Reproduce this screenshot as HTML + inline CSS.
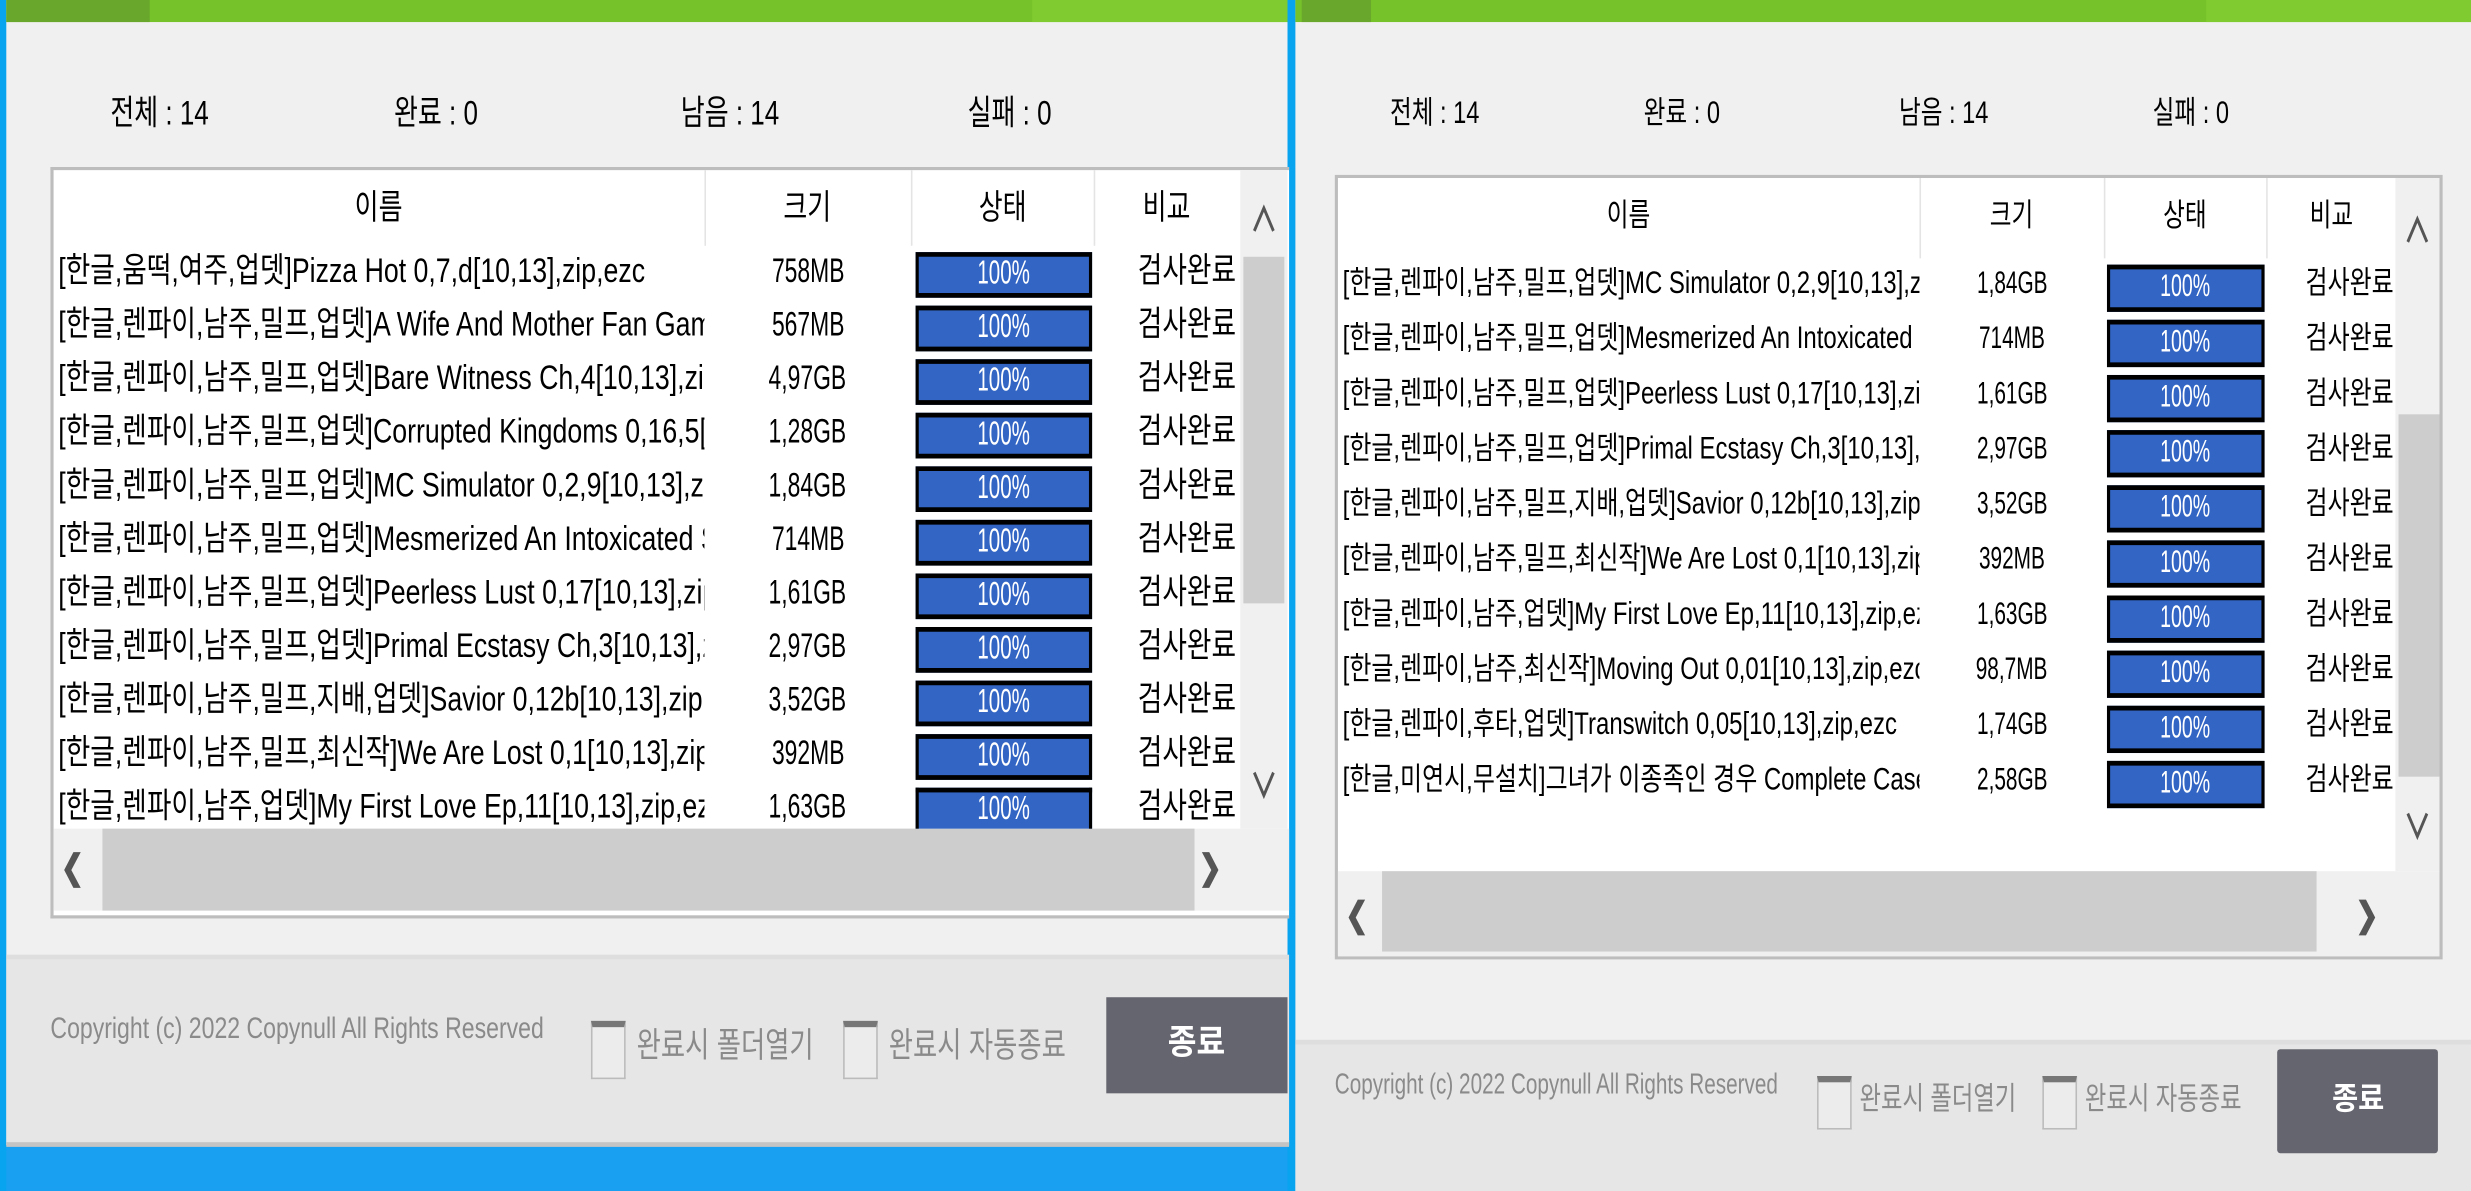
<!DOCTYPE html>
<html><head><meta charset="utf-8"><style>
*{margin:0;padding:0;box-sizing:border-box}
html,body{width:2471px;height:1191px;overflow:hidden;background:#1aa0f0}
#s{position:absolute;left:0;top:0;width:1568px;height:756px;transform:scale(1.5759,1.5754);transform-origin:0 0;font-family:"Liberation Sans","Noto Sans CJK KR",sans-serif}
.a{position:absolute}
.t{display:inline-block;white-space:nowrap;transform:scaleX(.75);transform-origin:left center;font-size:22px;line-height:24px;color:#000}
.nm .t{transform:scaleX(.77)}
.c{position:absolute;text-align:center;white-space:nowrap}
.c .t{transform-origin:center center}
.sz .t{transform:scaleX(.66)}
.nm{position:absolute;overflow:hidden;height:26px;white-space:nowrap}
.bar{position:absolute;background:#3366c4;border-top:3px solid #000;border-bottom:3px solid #000;border-left:2px solid #000;border-right:2px solid #000;text-align:center}
.bar .t{color:#fff;font-size:21px;line-height:22px;transform:scaleX(.62);transform-origin:center center}
.g .t{color:#8a8a8a}
.cb{position:absolute;width:22px;height:37px;background:#ececec;border:1px solid #bbb;border-top:4px solid #777}
.ar{position:absolute;font-size:22px;font-weight:bold;color:#555;text-align:center;transform:scaleX(.8)}
.r .t{font-size:20px}
.r .bar .t{font-size:20px}
.r .nm .t{transform:scaleX(.76)}
</style></head><body><div id="s">
<!-- left window -->
<div class="a" style="left:0;top:0;width:4px;height:756px;background:#08a4f0"></div>
<div class="a" style="left:4px;top:0;width:814px;height:727px;background:#f0f0f0"></div>
<div class="a" style="left:4px;top:0;width:814px;height:14px;background:#76c22a"></div>
<div class="a" style="left:4px;top:0;width:91px;height:14px;background:#68a72c"></div>
<div class="a" style="left:655px;top:0;width:163px;height:14px;background:#80cc30"></div>
<div class="a" style="left:817px;top:0;width:5px;height:756px;background:#08a4f0"></div>
<div class="a" style="left:70px;top:60px"><span class="t">전체 : 14</span></div>
<div class="a" style="left:250px;top:60px"><span class="t">완료 : 0</span></div>
<div class="a" style="left:432px;top:60px"><span class="t">남음 : 14</span></div>
<div class="a" style="left:614px;top:60px"><span class="t">실패 : 0</span></div>
<div class="a" style="left:32px;top:106px;width:786px;height:477px;border:2px solid #bdbdbd;border-right:none;background:#fff"></div>
<div class="a" style="left:447px;top:108px;width:1px;height:48px;background:#e4e4e4"></div>
<div class="a" style="left:578px;top:108px;width:1px;height:48px;background:#e4e4e4"></div>
<div class="a" style="left:694px;top:108px;width:1px;height:48px;background:#e4e4e4"></div>
<div class="c" style="left:34px;width:413px;top:120px"><span class="t">이름</span></div>
<div class="c" style="left:447px;width:131px;top:120px"><span class="t">크기</span></div>
<div class="c" style="left:578px;width:116px;top:120px"><span class="t">상태</span></div>
<div class="c" style="left:694px;width:93px;top:120px"><span class="t">비교</span></div>
<div class="a" style="left:787px;top:108px;width:30px;height:418px;background:#f0f0f0"></div>
<div class="a" style="left:789px;top:163px;width:26px;height:220px;background:#cdcdcd"></div>
<div class="ar" style="left:787px;width:30px;top:122px">&#8743;</div>
<div class="ar" style="left:787px;width:30px;top:482px">&#8744;</div>
<div class="a" style="left:34px;top:526px;width:784px;height:52px;background:#f0f0f0"></div>
<div class="a" style="left:65px;top:526px;width:693px;height:52px;background:#cdcdcd"></div>
<div class="ar" style="left:36px;width:20px;top:538px">&#10094;</div>
<div class="ar" style="left:758px;width:20px;top:538px">&#10095;</div>
<div class="a" style="left:4px;top:606px;width:814px;height:3px;background:#dedede"></div>
<div class="a" style="left:4px;top:609px;width:814px;height:118px;background:#e6e6e6"></div>
<div class="a" style="left:4px;top:725px;width:814px;height:3px;background:#c4c4c4"></div>
<div class="a g" style="left:32px;top:642px"><span class="t" style="font-size:19px;transform:scaleX(.77)">Copyright (c) 2022 Copynull All Rights Reserved</span></div>
<div class="cb" style="left:375px;top:648px"></div>
<div class="a g" style="left:404px;top:652px"><span class="t" style="transform:scaleX(.76)">완료시 폴더열기</span></div>
<div class="cb" style="left:535px;top:648px"></div>
<div class="a g" style="left:564px;top:652px"><span class="t" style="transform:scaleX(.76)">완료시 자동종료</span></div>
<div class="a" style="left:702px;top:633px;width:115px;height:61px;background:#65656f"></div>
<div class="c" style="left:702px;width:115px;top:650px"><span class="t" style="color:#fff;font-weight:bold;transform:scaleX(.9)">종료</span></div>

<!-- left rows -->
<div class="nm" style="left:37px;top:160px;width:410px"><span class="t">[한글,움떡,여주,업뎃]Pizza Hot 0,7,d[10,13],zip,ezc</span></div>
<div class="nm" style="left:37px;top:194px;width:410px"><span class="t">[한글,렌파이,남주,밀프,업뎃]A Wife And Mother Fan Game</span></div>
<div class="nm" style="left:37px;top:228px;width:410px"><span class="t">[한글,렌파이,남주,밀프,업뎃]Bare Witness Ch,4[10,13],zip</span></div>
<div class="nm" style="left:37px;top:262px;width:410px"><span class="t">[한글,렌파이,남주,밀프,업뎃]Corrupted Kingdoms 0,16,5[10</span></div>
<div class="nm" style="left:37px;top:296px;width:410px"><span class="t">[한글,렌파이,남주,밀프,업뎃]MC Simulator 0,2,9[10,13],zip</span></div>
<div class="nm" style="left:37px;top:330px;width:410px"><span class="t">[한글,렌파이,남주,밀프,업뎃]Mesmerized An Intoxicated S</span></div>
<div class="nm" style="left:37px;top:364px;width:410px"><span class="t">[한글,렌파이,남주,밀프,업뎃]Peerless Lust 0,17[10,13],zip</span></div>
<div class="nm" style="left:37px;top:398px;width:410px"><span class="t">[한글,렌파이,남주,밀프,업뎃]Primal Ecstasy Ch,3[10,13],zip</span></div>
<div class="nm" style="left:37px;top:432px;width:410px"><span class="t">[한글,렌파이,남주,밀프,지배,업뎃]Savior 0,12b[10,13],zip,ezc</span></div>
<div class="nm" style="left:37px;top:466px;width:410px"><span class="t">[한글,렌파이,남주,밀프,최신작]We Are Lost 0,1[10,13],zip,ezc</span></div>
<div class="nm" style="left:37px;top:500px;width:410px"><span class="t">[한글,렌파이,남주,업뎃]My First Love Ep,11[10,13],zip,ezc</span></div>
<div class="c sz" style="left:447px;width:131px;top:160px"><span class="t">758MB</span></div>
<div class="c sz" style="left:447px;width:131px;top:194px"><span class="t">567MB</span></div>
<div class="c sz" style="left:447px;width:131px;top:228px"><span class="t">4,97GB</span></div>
<div class="c sz" style="left:447px;width:131px;top:262px"><span class="t">1,28GB</span></div>
<div class="c sz" style="left:447px;width:131px;top:296px"><span class="t">1,84GB</span></div>
<div class="c sz" style="left:447px;width:131px;top:330px"><span class="t">714MB</span></div>
<div class="c sz" style="left:447px;width:131px;top:364px"><span class="t">1,61GB</span></div>
<div class="c sz" style="left:447px;width:131px;top:398px"><span class="t">2,97GB</span></div>
<div class="c sz" style="left:447px;width:131px;top:432px"><span class="t">3,52GB</span></div>
<div class="c sz" style="left:447px;width:131px;top:466px"><span class="t">392MB</span></div>
<div class="c sz" style="left:447px;width:131px;top:500px"><span class="t">1,63GB</span></div>
<div class="bar" style="left:581px;top:160px;width:112px;height:29px"><span class="t">100%</span></div>
<div class="bar" style="left:581px;top:194px;width:112px;height:29px"><span class="t">100%</span></div>
<div class="bar" style="left:581px;top:228px;width:112px;height:29px"><span class="t">100%</span></div>
<div class="bar" style="left:581px;top:262px;width:112px;height:29px"><span class="t">100%</span></div>
<div class="bar" style="left:581px;top:296px;width:112px;height:29px"><span class="t">100%</span></div>
<div class="bar" style="left:581px;top:330px;width:112px;height:29px"><span class="t">100%</span></div>
<div class="bar" style="left:581px;top:364px;width:112px;height:29px"><span class="t">100%</span></div>
<div class="bar" style="left:581px;top:398px;width:112px;height:29px"><span class="t">100%</span></div>
<div class="bar" style="left:581px;top:432px;width:112px;height:29px"><span class="t">100%</span></div>
<div class="bar" style="left:581px;top:466px;width:112px;height:29px"><span class="t">100%</span></div>
<div class="bar" style="left:581px;top:500px;width:112px;height:26px;border-bottom:none"><span class="t">100%</span></div>
<div class="nm" style="left:722px;top:160px;width:65px"><span class="t">검사완료</span></div>
<div class="nm" style="left:722px;top:194px;width:65px"><span class="t">검사완료</span></div>
<div class="nm" style="left:722px;top:228px;width:65px"><span class="t">검사완료</span></div>
<div class="nm" style="left:722px;top:262px;width:65px"><span class="t">검사완료</span></div>
<div class="nm" style="left:722px;top:296px;width:65px"><span class="t">검사완료</span></div>
<div class="nm" style="left:722px;top:330px;width:65px"><span class="t">검사완료</span></div>
<div class="nm" style="left:722px;top:364px;width:65px"><span class="t">검사완료</span></div>
<div class="nm" style="left:722px;top:398px;width:65px"><span class="t">검사완료</span></div>
<div class="nm" style="left:722px;top:432px;width:65px"><span class="t">검사완료</span></div>
<div class="nm" style="left:722px;top:466px;width:65px"><span class="t">검사완료</span></div>
<div class="nm" style="left:722px;top:500px;width:65px"><span class="t">검사완료</span></div>

<!-- right window -->
<div class="r">
<div class="a" style="left:822px;top:0;width:746px;height:756px;background:#f0f0f0"></div>
<div class="a" style="left:822px;top:0;width:746px;height:14px;background:#76c22a"></div>
<div class="a" style="left:826px;top:0;width:44px;height:14px;background:#68a72c"></div>
<div class="a" style="left:1400px;top:0;width:168px;height:14px;background:#80cc30"></div>
<div class="a" style="left:882px;top:60px"><span class="t">전체 : 14</span></div>
<div class="a" style="left:1043px;top:60px"><span class="t">완료 : 0</span></div>
<div class="a" style="left:1205px;top:60px"><span class="t">남음 : 14</span></div>
<div class="a" style="left:1366px;top:60px"><span class="t">실패 : 0</span></div>
<div class="a" style="left:847px;top:111px;width:703px;height:498px;border:2px solid #bdbdbd;background:#fff"></div>
<div class="a" style="left:1218px;top:113px;width:1px;height:51px;background:#e4e4e4"></div>
<div class="a" style="left:1335px;top:113px;width:1px;height:51px;background:#e4e4e4"></div>
<div class="a" style="left:1438px;top:113px;width:1px;height:51px;background:#e4e4e4"></div>
<div class="c" style="left:849px;width:369px;top:125px"><span class="t">이름</span></div>
<div class="c" style="left:1218px;width:117px;top:125px"><span class="t">크기</span></div>
<div class="c" style="left:1335px;width:103px;top:125px"><span class="t">상태</span></div>
<div class="c" style="left:1438px;width:82px;top:125px"><span class="t">비교</span></div>
<div class="a" style="left:1520px;top:113px;width:28px;height:440px;background:#f0f0f0"></div>
<div class="a" style="left:1522px;top:263px;width:26px;height:230px;background:#cdcdcd"></div>
<div class="ar" style="left:1520px;width:28px;top:129px">&#8743;</div>
<div class="ar" style="left:1520px;width:28px;top:508px">&#8744;</div>
<div class="a" style="left:849px;top:553px;width:699px;height:54px;background:#f0f0f0"></div>
<div class="a" style="left:877px;top:553px;width:593px;height:51px;background:#cdcdcd"></div>
<div class="ar" style="left:851px;width:20px;top:568px">&#10094;</div>
<div class="ar" style="left:1492px;width:20px;top:568px">&#10095;</div>
<div class="a" style="left:822px;top:660px;width:746px;height:3px;background:#dedede"></div>
<div class="a" style="left:822px;top:663px;width:746px;height:93px;background:#e6e6e6"></div>
<div class="a g" style="left:847px;top:676px"><span class="t" style="font-size:18px;transform:scaleX(.73)">Copyright (c) 2022 Copynull All Rights Reserved</span></div>
<div class="cb" style="left:1153px;top:683px;height:34px"></div>
<div class="a g" style="left:1180px;top:686px"><span class="t" style="transform:scaleX(.74)">완료시 폴더열기</span></div>
<div class="cb" style="left:1296px;top:683px;height:34px"></div>
<div class="a g" style="left:1323px;top:686px"><span class="t" style="transform:scaleX(.74)">완료시 자동종료</span></div>
<div class="a" style="left:1445px;top:666px;width:102px;height:66px;background:#65656f;border-radius:2px"></div>
<div class="c" style="left:1445px;width:102px;top:686px"><span class="t" style="color:#fff;font-weight:bold;transform:scaleX(.9)">종료</span></div>

<div class="nm" style="left:852px;top:168px;width:366px"><span class="t">[한글,렌파이,남주,밀프,업뎃]MC Simulator 0,2,9[10,13],zip</span></div>
<div class="nm" style="left:852px;top:203px;width:366px"><span class="t">[한글,렌파이,남주,밀프,업뎃]Mesmerized An Intoxicated S</span></div>
<div class="nm" style="left:852px;top:238px;width:366px"><span class="t">[한글,렌파이,남주,밀프,업뎃]Peerless Lust 0,17[10,13],zip</span></div>
<div class="nm" style="left:852px;top:273px;width:366px"><span class="t">[한글,렌파이,남주,밀프,업뎃]Primal Ecstasy Ch,3[10,13],zip</span></div>
<div class="nm" style="left:852px;top:308px;width:366px"><span class="t">[한글,렌파이,남주,밀프,지배,업뎃]Savior 0,12b[10,13],zip,ezc</span></div>
<div class="nm" style="left:852px;top:343px;width:366px"><span class="t">[한글,렌파이,남주,밀프,최신작]We Are Lost 0,1[10,13],zip,ezc</span></div>
<div class="nm" style="left:852px;top:378px;width:366px"><span class="t">[한글,렌파이,남주,업뎃]My First Love Ep,11[10,13],zip,ezc</span></div>
<div class="nm" style="left:852px;top:413px;width:366px"><span class="t">[한글,렌파이,남주,최신작]Moving Out 0,01[10,13],zip,ezc</span></div>
<div class="nm" style="left:852px;top:448px;width:366px"><span class="t">[한글,렌파이,후타,업뎃]Transwitch 0,05[10,13],zip,ezc</span></div>
<div class="nm" style="left:852px;top:483px;width:366px"><span class="t">[한글,미연시,무설치]그녀가 이종족인 경우 Complete Case</span></div>
<div class="c sz" style="left:1218px;width:117px;top:168px"><span class="t">1,84GB</span></div>
<div class="c sz" style="left:1218px;width:117px;top:203px"><span class="t">714MB</span></div>
<div class="c sz" style="left:1218px;width:117px;top:238px"><span class="t">1,61GB</span></div>
<div class="c sz" style="left:1218px;width:117px;top:273px"><span class="t">2,97GB</span></div>
<div class="c sz" style="left:1218px;width:117px;top:308px"><span class="t">3,52GB</span></div>
<div class="c sz" style="left:1218px;width:117px;top:343px"><span class="t">392MB</span></div>
<div class="c sz" style="left:1218px;width:117px;top:378px"><span class="t">1,63GB</span></div>
<div class="c sz" style="left:1218px;width:117px;top:413px"><span class="t">98,7MB</span></div>
<div class="c sz" style="left:1218px;width:117px;top:448px"><span class="t">1,74GB</span></div>
<div class="c sz" style="left:1218px;width:117px;top:483px"><span class="t">2,58GB</span></div>
<div class="bar" style="left:1337px;top:168px;width:100px;height:30px"><span class="t">100%</span></div>
<div class="bar" style="left:1337px;top:203px;width:100px;height:30px"><span class="t">100%</span></div>
<div class="bar" style="left:1337px;top:238px;width:100px;height:30px"><span class="t">100%</span></div>
<div class="bar" style="left:1337px;top:273px;width:100px;height:30px"><span class="t">100%</span></div>
<div class="bar" style="left:1337px;top:308px;width:100px;height:30px"><span class="t">100%</span></div>
<div class="bar" style="left:1337px;top:343px;width:100px;height:30px"><span class="t">100%</span></div>
<div class="bar" style="left:1337px;top:378px;width:100px;height:30px"><span class="t">100%</span></div>
<div class="bar" style="left:1337px;top:413px;width:100px;height:30px"><span class="t">100%</span></div>
<div class="bar" style="left:1337px;top:448px;width:100px;height:30px"><span class="t">100%</span></div>
<div class="bar" style="left:1337px;top:483px;width:100px;height:30px"><span class="t">100%</span></div>
<div class="nm" style="left:1463px;top:168px;width:57px"><span class="t">검사완료</span></div>
<div class="nm" style="left:1463px;top:203px;width:57px"><span class="t">검사완료</span></div>
<div class="nm" style="left:1463px;top:238px;width:57px"><span class="t">검사완료</span></div>
<div class="nm" style="left:1463px;top:273px;width:57px"><span class="t">검사완료</span></div>
<div class="nm" style="left:1463px;top:308px;width:57px"><span class="t">검사완료</span></div>
<div class="nm" style="left:1463px;top:343px;width:57px"><span class="t">검사완료</span></div>
<div class="nm" style="left:1463px;top:378px;width:57px"><span class="t">검사완료</span></div>
<div class="nm" style="left:1463px;top:413px;width:57px"><span class="t">검사완료</span></div>
<div class="nm" style="left:1463px;top:448px;width:57px"><span class="t">검사완료</span></div>
<div class="nm" style="left:1463px;top:483px;width:57px"><span class="t">검사완료</span></div>
</div>
</div></body></html>
